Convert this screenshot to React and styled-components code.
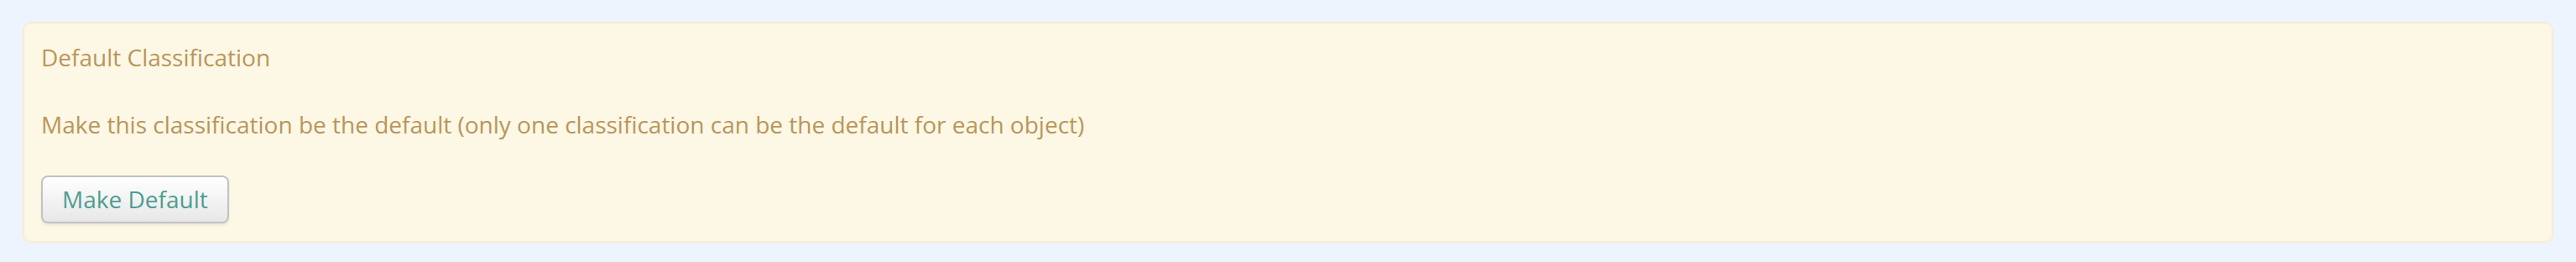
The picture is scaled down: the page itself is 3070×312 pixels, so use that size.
import React from "react";
import styled, { createGlobalStyle } from "styled-components";

const GlobalStyle = createGlobalStyle`
  html, body {
    margin: 0;
    padding: 0;
    background: #edf4fe;
  }
  body {
    font-family: "Open Sans", "Noto Sans", sans-serif;
  }
`;

const Page = styled.div`
  padding: 26px 27px 23px;
`;

const Panel = styled.section`
  background: #fdf7e5;
  border: 2px solid #f8ecd2;
  border-radius: 10px;
  padding: 20px 20px 21px;
  color: #b8965a;
  font-size: 28px;
  line-height: 40px;
`;

const Title = styled.h4`
  margin: 0 0 40px;
  font-size: 28px;
  font-weight: 400;
  line-height: 40px;
`;

const Text = styled.p`
  margin: 0 0 41px;
`;

const Button = styled.button`
  font-family: inherit;
  font-size: 28px;
  line-height: 40px;
  color: #4d9e91;
  padding: 6px 23px 7px;
  border: 2px solid #c2c2c2;
  border-radius: 8px;
  background: linear-gradient(to bottom, #ffffff 0%, #e7e7e7 100%);
  box-shadow: 0 2px 3px rgba(0, 0, 0, 0.08);
  cursor: pointer;
`;

export default function App() {
  return (
    <>
      <GlobalStyle />
      <Page>
        <Panel>
          <Title>Default Classification</Title>
          <Text>
            Make this classification be the default (only one classification can
            be the default for each object)
          </Text>
          <Button type="button">Make Default</Button>
        </Panel>
      </Page>
    </>
  );
}
